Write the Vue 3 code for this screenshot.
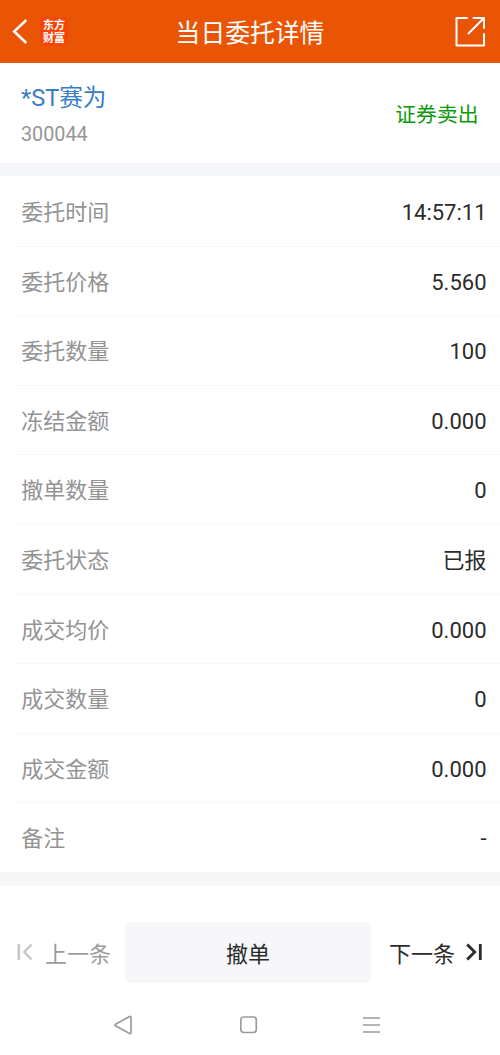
<template>
    <div class="page">
        <header class="navbar">
            <svg class="back" width="16" height="26" viewBox="0 0 16 26">
                <path d="M14.3 1L2.2 12.5L14.3 24" fill="none" stroke="#fff" stroke-width="2.5" />
            </svg>
            <div class="logo">
                <span>东方</span>
                <span>财富</span>
            </div>
            <h1 class="title">当日委托详情</h1>
            <svg class="share" width="32" height="32" viewBox="0 0 32 32">
                <g fill="none" stroke="#fff" stroke-width="2" stroke-linecap="round" stroke-linejoin="round">
                    <path d="M12 2H1.5V29.5H29V18" />
                    <path d="M18.5 2H29V12" />
                    <path d="M28.5 2.5L13.5 17.5" />
                </g>
            </svg>
        </header>

        <section class="stock">
            <div>
                <div class="stock-name">*ST赛为</div>
                <div class="stock-code">300044</div>
            </div>
            <div class="direction">证券卖出</div>
        </section>

        <ul class="details">
            <li v-for="item in details" :key="item.label" class="row">
                <span class="label">{{ item.label }}</span>
                <span class="value">{{ item.value }}</span>
            </li>
        </ul>

        <div class="actions">
            <button class="step prev">
                <svg width="16" height="18" viewBox="0 0 16 18" fill="none" stroke="#c4c4c4" stroke-width="2.3">
                    <path d="M3.8 1V17M16.5 1.5L9.3 9L16.5 16.5" />
                </svg>
                <span>上一条</span>
            </button>
            <button class="cancel">撤单</button>
            <button class="step next">
                <span>下一条</span>
                <svg width="16" height="18" viewBox="0 0 16 18" fill="none" stroke="#2b2b2b" stroke-width="2.8">
                    <path d="M14.3 1V17M1.2 1.5L8.7 9L1.2 16.5" />
                </svg>
            </button>
        </div>

        <nav class="system">
            <svg width="20" height="20" viewBox="0 0 20 20">
                <path d="M2.5 9.2L16.2 1.7Q18 .9 18 2.8V17.2Q18 19.1 16.2 18.3L2.5 10.8Q1.3 10 2.5 9.2Z" />
            </svg>
            <svg width="20" height="20" viewBox="0 0 20 20">
                <rect x="2.8" y="2" width="15.5" height="15.5" rx="3" />
            </svg>
            <svg width="20" height="20" viewBox="0 0 20 20">
                <path d="M1 3H18M1 10H18M1 17H18" />
            </svg>
        </nav>
    </div>
</template>

<script setup>
import { ref } from 'vue';

const details = ref([
    { label: '委托时间', value: '14:57:11' },
    { label: '委托价格', value: '5.560' },
    { label: '委托数量', value: '100' },
    { label: '冻结金额', value: '0.000' },
    { label: '撤单数量', value: '0' },
    { label: '委托状态', value: '已报' },
    { label: '成交均价', value: '0.000' },
    { label: '成交数量', value: '0' },
    { label: '成交金额', value: '0.000' },
    { label: '备注', value: '-' },
]);
</script>

<style>
body{
    margin: 0;
    background: #fff;
}
</style>

<style scoped>
.page{
    display: flex;
    flex-direction: column;
    height: 1055px;
    overflow: hidden;
    background: #fff;
    color: #2b2b2b;
    font-family: Roboto, "Noto Sans CJK SC", sans-serif;
    font-size: 22px;
}
.navbar{
    position: relative;
    display: flex;
    align-items: center;
    box-sizing: border-box;
    height: 63px;
    flex: none;
    padding: 0 13px 0 12px;
    background: #e95504;
    color: #fff;
}
.logo{
    display: flex;
    flex-direction: column;
    align-items: center;
    justify-content: center;
    width: 28px;
    height: 29px;
    margin-left: 12px;
    border-radius: 5px;
    background: #f5460a;
    font-size: 11px;
    font-weight: 700;
    line-height: 13px;
}
.title{
    position: absolute;
    left: 0;
    right: 0;
    margin: 0;
    padding-top: 4px;
    text-align: center;
    font-size: 24.8px;
    font-weight: 400;
    line-height: 36px;
}
.share{
    margin-left: auto;
}
.stock{
    display: flex;
    align-items: center;
    justify-content: space-between;
    box-sizing: border-box;
    height: 113px;
    flex: none;
    padding: 0 21.5px 0 21px;
    border-bottom: 13px solid #f5f6f9;
}
.stock-name{
    padding-top: 6px;
    color: #3a7dc4;
    font-size: 23.6px;
    line-height: 36px;
}
.stock-code{
    color: #969696;
    font-size: 19.8px;
    line-height: 37px;
}
.direction{
    color: #0c9a0c;
    font-size: 20.8px;
}
.details{
    list-style: none;
    flex: none;
    margin: 0;
    padding: 0;
    border-bottom: 14px solid #f7f7f7;
}
.row{
    display: flex;
    align-items: center;
    justify-content: space-between;
    box-sizing: border-box;
    height: 69.6px;
    margin-left: 16px;
    padding: 4px 13.5px 0 5.2px;
    line-height: 32px;
}
.row + .row{
    padding-top: 3.5px;
    border-top: 1px solid #f7f7f7;
}
.label{
    color: #939393;
}
.value{
    font-size: 22px;
}
.actions{
    display: flex;
    align-items: center;
    flex: none;
    height: 61px;
    margin-top: 36px;
    padding: 0 18px 0 15px;
}
.actions button{
    padding: 0;
    border: none;
    background: none;
    color: inherit;
    font: inherit;
}
.actions .step{
    display: flex;
    align-items: center;
}
.actions .step svg{
    overflow: visible;
}
.actions .prev{
    gap: 14px;
    color: #9c9c9c;
}
.actions .next{
    gap: 11px;
    margin-left: auto;
}
.actions .cancel{
    width: 246px;
    height: 61px;
    margin-left: 14px;
    border-radius: 5px;
    background: #f7f7fa;
}
.system{
    display: flex;
    justify-content: space-between;
    margin-top: 32px;
    padding: 0 118px 0 113px;
}
.system svg{
    fill: none;
    stroke: #9b9b9b;
    stroke-width: 1.7;
}
</style>
